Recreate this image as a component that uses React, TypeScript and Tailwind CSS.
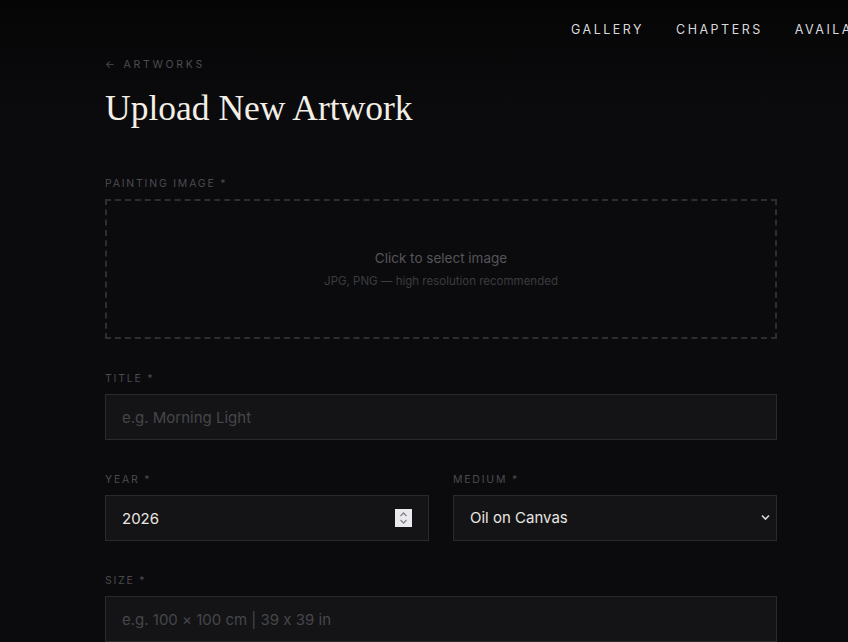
const sans = "font-['Inter','Liberation_Sans',sans-serif] [font-feature-settings:'calt'_0]";

function Label({ children }: { children: React.ReactNode }) {
  return (
    <label
      className={`mb-[7px] block pt-px text-[10.5px] leading-4 uppercase tracking-[0.17em] text-[#4a4a50] ${sans}`}
    >
      {children}
    </label>
  );
}

const fieldClass =
  "block h-[46px] w-full border border-[#2a2a2d] bg-[#141416] px-4 text-[15px] text-[#e8e6e1] placeholder:text-[#46464b] outline-none";

export default function App() {
  return (
    <div className={`relative min-h-[642px] w-[848px] overflow-hidden bg-[#0b0b0d] ${sans}`}>
      <div className="absolute inset-x-0 top-0 h-[110px] bg-gradient-to-b from-[#050506] to-transparent" />

      <header className="relative whitespace-nowrap pt-[21px]">
        <nav className="flex gap-8 pl-[571px] text-[12.5px] leading-[17px] uppercase tracking-[0.2em] text-[#d9d9dc]">
          <a href="#gallery">Gallery</a>
          <a href="#chapters">Chapters</a>
          <a href="#available">Available</a>
          <a href="#about">About</a>
        </nav>
      </header>

      <main className="relative ml-[105px] w-[672px] pt-[19px]">
        <a
          href="#artworks"
          className="block text-[10.5px] leading-4 uppercase tracking-[0.26em] text-[#4c4c52]"
        >
          ← Artworks
        </a>
        <h1 className="mt-[15px] font-['Liberation_Serif','Times_New_Roman',serif] text-[35.5px] leading-10 text-[#f3eee6]">
          Upload New Artwork
        </h1>

        <form className="mt-[47px] flex flex-col gap-8">
          <div>
            <Label>Painting Image *</Label>
            <div className="flex h-[140px] flex-col items-center justify-center border-2 border-dashed border-[#2e2e32] pb-[2px] text-center">
              <p className="text-[13.5px] leading-5 text-[#55555b]">Click to select image</p>
              <p className="mt-[5px] text-[11.5px] leading-4 text-[#3b3b40]">
                JPG, PNG — high resolution recommended
              </p>
            </div>
          </div>

          <div className="-mt-px">
            <Label>Title *</Label>
            <input type="text" placeholder="e.g. Morning Light" className={fieldClass} />
          </div>

          <div className="-mt-px grid grid-cols-2 items-start gap-6">
            <div>
              <Label>Year *</Label>
              <div className="relative">
                <input type="number" defaultValue={2026} className={fieldClass} />
                <span className="absolute right-[17px] top-[14px] flex h-[18px] w-[17px] flex-col items-center justify-center bg-[#e9e9ee] text-[#85858c]">
                  <svg width="9" height="14" viewBox="0 0 9 14" fill="none" stroke="currentColor" strokeWidth="1.3">
                    <path d="M1.5 5 L4.5 2 L7.5 5" />
                    <path d="M1.5 9 L4.5 12 L7.5 9" />
                  </svg>
                </span>
              </div>
            </div>
            <div>
              <Label>Medium *</Label>
              <div className="relative">
                <select defaultValue="oil" className={`${fieldClass} appearance-none pl-4 pr-8`}>
                  <option value="oil">Oil on Canvas</option>
                  <option value="acrylic">Acrylic on Canvas</option>
                  <option value="watercolor">Watercolor</option>
                </select>
                <svg
                  className="pointer-events-none absolute right-[7px] top-[19px] text-[#d4d4d8]"
                  width="9"
                  height="7"
                  viewBox="0 0 9 7"
                  fill="none"
                  stroke="currentColor"
                  strokeWidth="1.6"
                >
                  <path d="M1 1.5 L4.5 5 L8 1.5" />
                </svg>
              </div>
            </div>
          </div>

          <div className="-mt-px">
            <Label>Size *</Label>
            <input
              type="text"
              placeholder="e.g. 100 × 100 cm | 39 x 39 in"
              className={fieldClass}
            />
          </div>
        </form>
      </main>
    </div>
  );
}
